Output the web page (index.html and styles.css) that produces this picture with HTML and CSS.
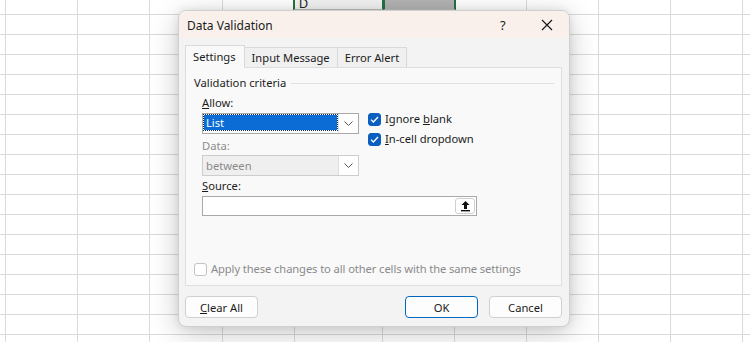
FILE: index.html
```html
<!DOCTYPE html>
<html lang="en">
<head>
<meta charset="utf-8"/>
<title>Data Validation</title>
<link rel="stylesheet" href="styles.css">
</head>
<body>
<div class="sheet">
  <div class="col w5"></div>
  <div class="col w72"></div>
  <div class="col w72"></div>
  <div class="col w73"></div>
  <div class="col w72"></div>
  <div class="col w88 head-d"><span class="col-name">D</span></div>
  <div class="col w73 head-sel"></div>
  <div class="col w72"></div>
  <div class="col w72"></div>
  <div class="col w72"></div>
  <div class="col w72"></div>
  <div class="col w7"></div>
</div>

<div class="dialog">
  <div class="titlebar">
    <span class="title">Data Validation</span>
    <span class="help">?</span>
    <svg class="close" width="12" height="12" viewBox="0 0 12 12"><path d="M1 1L11 11M11 1L1 11" stroke="#1a1a1a" stroke-width="1.2"/></svg>
  </div>

  <div class="body">
    <div class="tabs">
      <div class="tab active">Settings</div>
      <div class="tab">Input Message</div>
      <div class="tab">Error Alert</div>
    </div>

    <div class="panel">
      <div class="legend"><span>Validation criteria</span><span class="rule"></span></div>

      <div class="criteria">
        <div class="label"><u>A</u>llow:</div>
        <div class="allow-row">
          <div class="select">
            <div class="value"><span class="picked">List</span></div>
            <div class="arrow"><svg width="9" height="5" viewBox="0 0 9 5"><path d="M0.5 0.5L4.5 4.5L8.5 0.5" fill="none" stroke="#555" stroke-width="1"/></svg></div>
          </div>
          <div class="checks">
            <label class="check"><span class="box on"><svg width="9" height="7" viewBox="0 0 9 7"><path d="M1 3.6L3.4 6L8 1" fill="none" stroke="#fff" stroke-width="1.3"/></svg></span><span>Ignore <u>b</u>lank</span></label>
            <label class="check"><span class="box on"><svg width="9" height="7" viewBox="0 0 9 7"><path d="M1 3.6L3.4 6L8 1" fill="none" stroke="#fff" stroke-width="1.3"/></svg></span><span><u>I</u>n-cell dropdown</span></label>
          </div>
        </div>

        <div class="label muted">Data:</div>
        <div class="select disabled">
          <div class="value">between</div>
          <div class="arrow"><svg width="9" height="5" viewBox="0 0 9 5"><path d="M0.5 0.5L4.5 4.5L8.5 0.5" fill="none" stroke="#555" stroke-width="1"/></svg></div>
        </div>

        <div class="label source-label"><u>S</u>ource:</div>
        <div class="source">
          <span class="pick"><svg width="11" height="12" viewBox="0 0 11 12"><path d="M5.5 1L1.5 5H4V9H7V5H9.5Z" fill="#111"/><rect x="1" y="10" width="9" height="1.4" fill="#111"/></svg></span>
        </div>
      </div>

      <label class="check apply"><span class="box"></span><span>Apply these changes to all other cells with the same settings</span></label>
    </div>

    <div class="buttons">
      <button class="btn"><u>C</u>lear All</button>
      <span class="spacer"></span>
      <button class="btn primary">OK</button>
      <button class="btn">Cancel</button>
    </div>
  </div>
</div>
</body>
</html>
```

FILE: styles.css
```css
body {
  margin: 0;
  width: 750px;
  height: 342px;
  overflow: hidden;
  background: #fff;
  font-family: 'Noto Sans', 'Open Sans', sans-serif;
  font-size: 11.2px;
  color: #1b1b1b;
  position: relative;
}

/* spreadsheet behind the dialog */
.sheet {
  display: flex;
  height: 342px;
  background-image: repeating-linear-gradient(to bottom, transparent 0, transparent 14px, #dadada 14px, #dadada 15px, transparent 15px, transparent 20px);
}
.col {
  height: 100%;
  border-right: 1px solid #dadada;
  box-sizing: border-box;
  position: relative;
}
.w5 { width: 6px; }
.w7 { width: 7px; border-right: none; }
.w72 { width: 72px; }
.w73 { width: 73px; }
.w88 { width: 88px; }

/* column headers peeking above the dialog */
.head-d::before,
.head-sel::before {
  content: "";
  position: absolute;
  left: -2px;
  right: -2px;
  top: 0;
  height: 9px;
  background: #f3f3f3;
  border-left: 2px solid #217346;
  border-right: 2px solid #217346;
  border-bottom: 1px solid #bdbdbd;
}
.head-sel::before { background: #b3b3b3; left: 0; }
.col-name {
  position: absolute;
  left: 4px;
  top: -4px;
  font-size: 13px;
  line-height: 14px;
  color: #222;
  z-index: 1;
}

/* dialog */
.dialog {
  position: absolute;
  left: 178px;
  top: 10px;
  width: 392px;
  height: 317px;
  border-radius: 8px;
  background: #f3f3f3;
  border: 1px solid #cfcfcf;
  box-sizing: border-box;
  box-shadow: 0 6px 28px rgba(0, 0, 0, 0.22), 0 0 8px rgba(0, 0, 0, 0.08);
  overflow: hidden;
  display: flex;
  flex-direction: column;
}
.titlebar {
  height: 29px;
  background: #f9f0ec;
  display: flex;
  align-items: center;
  padding-left: 8px;
}
.title { flex: 1; font-size: 12px; margin-top: 2px; }
.help { width: 14px; margin-right: 27px; font-size: 13px; }
.close { margin-right: 16px; }

.body {
  flex: 1;
  padding: 8px 7px 8px 6px;
  display: flex;
  flex-direction: column;
}
.tabs {
  display: flex;
  align-items: flex-end;
  height: 21px;
  padding-left: 1px;
}
.tab {
  height: 20px;
  line-height: 20px;
  padding: 0 7px 0 7px;
  background: #f0f0f0;
  border: 1px solid #d9d9d9;
  border-bottom: none;
  box-sizing: border-box;
  margin-left: -1px;
}
.tab.active {
  height: 23px;
  line-height: 22px;
  padding: 0 8px 0 7px;
  background: #f9f9f9;
  position: relative;
  z-index: 1;
  margin-bottom: -1px;
}
.panel {
  height: 219px;
  background: #f9f9f9;
  border: 1px solid #dedede;
  box-sizing: border-box;
  padding: 7px 7px 0 8px;
  display: flex;
  flex-direction: column;
}
.legend {
  display: flex;
  align-items: center;
  gap: 5px;
  line-height: 16px;
}
.rule { flex: 1; border-top: 1px solid #e0e0e0; }

.criteria { padding-left: 8px; }
.label { line-height: 15px; margin-top: 4px; }
.label.muted { color: #8c8c8c; }
.label.source-label { margin-top: 2px; }
.allow-row { display: flex; gap: 9px; margin-top: 3px; height: 21px; }

.select {
  width: 157px;
  height: 21px;
  border: 1px solid #a9a9a9;
  background: #fff;
  box-sizing: border-box;
  display: flex;
}
.select .value {
  flex: 1;
  color: #8a8a8a;
  line-height: 17px;
  padding: 1px 1px 1px 3px;
}
.select .picked {
  display: block;
  height: 15px;
  line-height: 15px;
  margin-left: -2px;
  background: #0a6cd4;
  color: #fff;
  outline: 1px dotted #0c2d5e;
  padding-left: 2px;
}
.select .arrow {
  width: 19px;
  border-left: 1px solid #dedede;
  display: flex;
  align-items: center;
  justify-content: center;
  background: #fff;
}
.select.disabled { background: #efefef; border-color: #cdcdcd; margin-top: 2px; }

.checks { display: flex; flex-direction: column; gap: 4px; margin-top: -2px; height: 36px; }
.check { display: flex; align-items: center; gap: 4px; line-height: 16px; white-space: nowrap; }
.box {
  width: 13px;
  height: 13px;
  border-radius: 3px;
  box-sizing: border-box;
  border: 1px solid #8d8d8d;
  background: #fff;
  display: flex;
  align-items: center;
  justify-content: center;
  flex: none;
}
.box.on { background: #0a5fc0; border-color: #0a5fc0; }

.source {
  width: 275px;
  height: 20px;
  margin-top: 3px;
  border: 1px solid #a9a9a9;
  background: #fff;
  box-sizing: border-box;
  display: flex;
  justify-content: flex-end;
  align-items: center;
  padding-right: 1px;
}
.pick {
  width: 20px;
  height: 16px;
  border: 1px solid #cfcfcf;
  border-radius: 3px;
  box-sizing: border-box;
  display: flex;
  align-items: center;
  justify-content: center;
}

.apply { color: #8a8a8a; margin-top: auto; margin-bottom: 8px; letter-spacing: -0.1px; }
.apply .box { border-color: #c4c4c4; }

.buttons {
  display: flex;
  gap: 11px;
  margin-top: 10px;
}
.spacer { flex: 1; }
.btn {
  width: 73px;
  height: 22px;
  background: #fdfdfd;
  border: 1px solid #d0d0d0;
  border-radius: 4px;
  font-family: inherit;
  font-size: 11.2px;
  color: #1b1b1b;
  padding: 0;
}
.btn.primary { border-color: #0067c0; }
```
